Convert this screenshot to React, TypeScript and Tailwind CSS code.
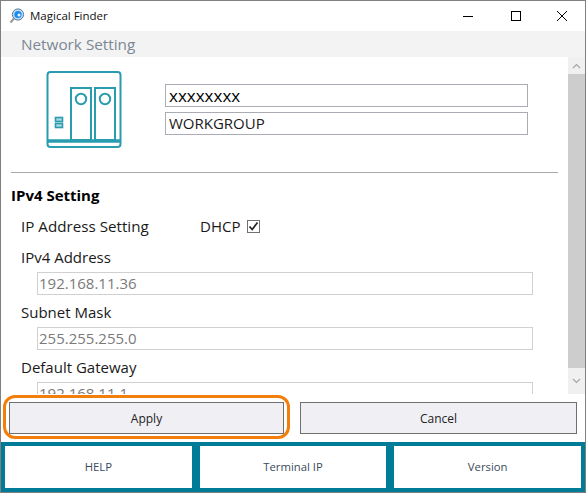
const font = "font-['Open_Sans','Noto_Sans',sans-serif]";

const Field = ({ label, value }: { label: string; value: string }) => (
  <div className="flex flex-col">
    <div className="h-[24px] pl-[21px] text-[15px] leading-[24px] text-[#1a1a1a]">{label}</div>
    <div className="ml-[37px] mr-[35px] mt-[3px] flex h-[23px] items-center border border-[#d0d0d0] pl-[1px] text-[15px] text-[#7a7a7a]">
      {value}
    </div>
  </div>
);

const NasIcon = () => (
  <svg width="76" height="78" viewBox="0 0 76 78" fill="none" stroke="#2a9cb0" strokeWidth="2">
    <rect x="1.5" y="1" width="73" height="75" rx="3" />
    <rect x="25" y="17" width="20" height="52" />
    <rect x="49" y="17" width="20" height="52" />
    <circle cx="35" cy="28" r="5.2" />
    <circle cx="59" cy="28" r="5.2" />
    <rect x="9.5" y="46.5" width="7" height="4" strokeWidth="1.6" fill="#a8d8e0" />
    <rect x="9.5" y="52.5" width="7" height="4" strokeWidth="1.6" fill="#a8d8e0" />
    <path d="M1.5 70H74.5" strokeWidth="3.5" />
  </svg>
);

const AppIcon = () => (
  <svg width="16" height="16" viewBox="0 0 16 16">
    <path d="M5 10.5L1.5 14.5" stroke="#9a9a9a" strokeWidth="2" />
    <circle cx="9" cy="6.5" r="5.6" fill="#bcd9f2" stroke="#5c7a99" strokeWidth="1" />
    <circle cx="9" cy="6.5" r="3.6" fill="#1a8cf0" />
    <circle cx="10" cy="7" r="1.5" fill="#e8f4ff" />
  </svg>
);

const NavButton = ({ label }: { label: string }) => (
  <div className="flex flex-1 items-center justify-center bg-white pt-px text-[11.3px] text-[#3a4a5c]">{label}</div>
);

export default function App() {
  return (
    <div className={`${font} flex h-[493px] w-[586px] flex-col border-x border-y border-[#808080] bg-white`}>
      <div className="flex h-[30px] shrink-0 items-center">
        <div className="ml-[8px]"><AppIcon /></div>
        <span className="ml-[5px] text-[11.5px] text-[#111]">Magical Finder</span>
        <div className="ml-auto flex items-center">
          <svg width="12" height="12" viewBox="0 0 12 12" className="mr-[36px]" stroke="#000" fill="none">
            <path d="M1 6.5H11" />
          </svg>
          <svg width="12" height="12" viewBox="0 0 12 12" className="mr-[34px]" stroke="#000" fill="none">
            <rect x="1.5" y="1.5" width="9" height="9" />
          </svg>
          <svg width="12" height="12" viewBox="0 0 12 12" className="mr-[17px]" stroke="#000" fill="none">
            <path d="M1 1L11 11M11 1L1 11" />
          </svg>
        </div>
      </div>

      <div className="flex h-[26px] shrink-0 items-center bg-[#f3f3f3] pl-[20px] text-[15.3px] text-[#7b8794]">
        Network Setting
      </div>

      <div className="flex h-[337px] shrink-0">
        <div className="min-w-0 flex-1 overflow-hidden">
          <div className="flex pl-[45px] pt-[14px]">
            <NasIcon />
            <div className="ml-[43px] mt-[13px] flex w-[363px] flex-col gap-[5px]">
              <div className="flex h-[23px] items-center border border-[#ababb3] pl-[3px] text-[17px] text-black">xxxxxxxx</div>
              <div className="flex h-[23px] items-center border border-[#ababb3] pl-[3px] text-[15px] text-[#1a1a1a]">WORKGROUP</div>
            </div>
          </div>
          <div className="ml-[10px] mr-[10px] mt-[23px] h-px bg-[#a8a8a8]" />
          <div className="mt-[12px] pl-[10px] text-[15px] font-bold leading-[20px] text-black">IPv4 Setting</div>
          <div className="mt-[11px] flex h-[20px] items-center pl-[20px] text-[15.2px] text-[#1a1a1a]">
            <span className="w-[179px]">IP Address Setting</span>
            <span className="text-[15px]">DHCP</span>
            <span className="ml-[7px] flex h-[13px] w-[13px] items-center justify-center border border-[#707070]">
              <svg width="11" height="11" viewBox="0 0 11 11" fill="none" stroke="#222" strokeWidth="1.7">
                <path d="M1.5 5.5L4.2 8.5L9.5 1.5" />
              </svg>
            </span>
          </div>
          <div className="mt-[9px] flex flex-col gap-[5px] -ml-px">
            <Field label="IPv4 Address" value="192.168.11.36" />
            <Field label="Subnet Mask" value="255.255.255.0" />
            <Field label="Default Gateway" value="192.168.11.1" />
          </div>
        </div>
        <div className="flex w-[17px] shrink-0 flex-col items-center bg-[#f0f0f0]">
          <div className="flex h-[17px] items-center justify-center">
            <svg width="9" height="6" viewBox="0 0 9 6" fill="none" stroke="#a6a6a6" strokeWidth="1.2"><path d="M1 5L4.5 1.5L8 5" /></svg>
          </div>
          <div className="w-full flex-1 bg-[#cdcdcd]" />
          <div className="flex h-[26px] items-center justify-center">
            <svg width="9" height="6" viewBox="0 0 9 6" fill="none" stroke="#a6a6a6" strokeWidth="1.2"><path d="M1 1L4.5 4.5L8 1" /></svg>
          </div>
        </div>
      </div>

      <div className="flex h-[48px] shrink-0 items-center gap-[16px] pl-[8px] pr-[8px]">
        <div className="relative flex-1">
          <div className="flex h-[32px] items-center justify-center border border-[#6f6f6f] bg-[#f0eff4] pt-px text-[12px] text-[#222]">Apply</div>
          <div className="absolute -bottom-[5px] -left-[6px] -right-[6px] -top-[7px] rounded-[12px] border-[3px] border-[#f27f0c]" />
        </div>
        <div className="flex h-[32px] flex-1 items-center justify-center border border-[#6f6f6f] bg-[#f0eff4] pt-px text-[12px] text-[#222]">Cancel</div>
      </div>

      <div className="flex min-h-0 flex-1 gap-[8px] bg-[#007c99] px-[4px] py-[4px]">
        <NavButton label="HELP" />
        <NavButton label="Terminal IP" />
        <NavButton label="Version" />
      </div>
    </div>
  );
}
